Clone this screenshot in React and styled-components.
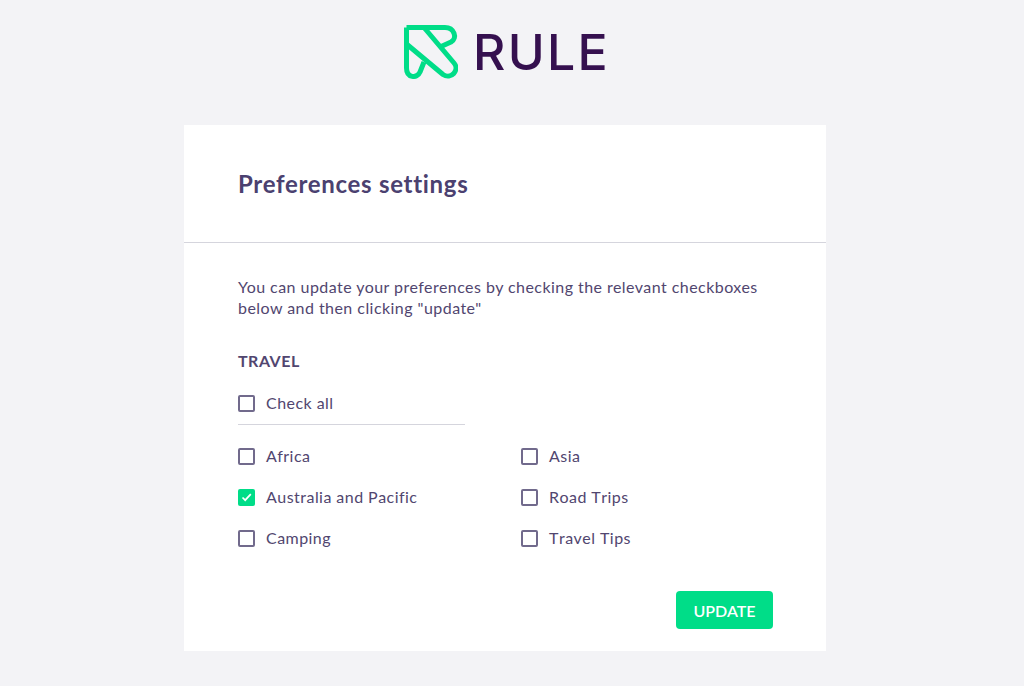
import React, { useState } from 'react';
import styled, { createGlobalStyle } from 'styled-components';

const Global = createGlobalStyle`
  html, body { margin: 0; padding: 0; }
  body {
    background: #f3f3f6;
    font-family: Lato, "Liberation Sans", sans-serif;
    color: #51466f;
  }
`;

const Page = styled.div`
  display: flex;
  flex-direction: column;
  align-items: center;
  box-sizing: border-box;
  height: 686px;
  padding-right: 14px;
  overflow: hidden;
`;

const LogoRow = styled.header`
  height: 125px;
  width: 100%;
  display: flex;
  justify-content: center;
  align-items: flex-start;
  gap: 15px;
  padding: 25px 0 0 4px;
  box-sizing: border-box;
`;

const LogoText = styled.span`
  font-family: Inter, sans-serif;
  font-size: 50px;
  line-height: 54px;
  font-weight: 500;
  color: #35104f;
  letter-spacing: 2.3px;
`;

const Card = styled.main`
  width: 642px;
  background: #fff;
`;

const CardHead = styled.div`
  height: 117px;
  padding: 0 54px;
  display: flex;
  align-items: center;
  border-bottom: 1px solid #d5d5dd;
`;

const Title = styled.h1`
  margin: 0;
  font-size: 24px;
  font-weight: 700;
  letter-spacing: 0.7px;
  color: #4b4170;
`;

const CardBody = styled.div`
  padding: 33px 53px 22px 54px;
`;

const Intro = styled.p`
  margin: 0 0 33px;
  font-size: 16px;
  line-height: 21px;
  letter-spacing: 0.45px;
`;

const GroupName = styled.h2`
  margin: 0 0 20px;
  font-size: 16px;
  line-height: 20px;
  font-weight: 700;
  letter-spacing: 0.5px;
`;

const CheckAllRow = styled.div`
  width: 227px;
  padding-bottom: 11px;
  border-bottom: 1px solid #d5d5dd;
  margin-bottom: 19px;
`;

const Options = styled.div`
  display: grid;
  grid-template-columns: 283px 1fr;
  row-gap: 19px;
`;

const Row = styled.label`
  display: flex;
  align-items: center;
  gap: 11px;
  height: 22px;
  font-size: 16px;
  letter-spacing: 0.45px;
  font-kerning: none;
  cursor: pointer;
`;

const Box = styled.span`
  width: 17px;
  height: 17px;
  margin-top: 2px;
  box-sizing: border-box;
  border-radius: 2px;
  border: ${p => (p.$on ? 'none' : '2px solid #716a8c')};
  background: ${p => (p.$on ? '#00dd88' : '#fff')};
  display: flex;
  align-items: center;
  justify-content: center;
`;

const HiddenInput = styled.input`
  position: absolute;
  opacity: 0;
  width: 0;
  height: 0;
`;

const Footer = styled.div`
  display: flex;
  justify-content: flex-end;
  margin-top: 43px;
`;

const UpdateButton = styled.button`
  width: 97px;
  height: 38px;
  border: none;
  border-radius: 4px;
  background: #00dd88;
  color: #fff;
  font-family: inherit;
  font-size: 16px;
  font-weight: 600;
  cursor: pointer;
`;

const Logo = () => (
  <svg width="54" height="54" viewBox="0 0 54 54" fill="none" stroke="#00dd88" strokeWidth="5" strokeLinejoin="round">
    <path d="M2.5 2.5H41C50 2.5 54 13 47 17L36 22" />
    <path d="M20 2.5L50 38C56 45 47 55 39 49.5L2.5 19" />
    <path d="M2.5 2.5V43C2.5 53 13 54 16 47L20 37" />
  </svg>
);

const Option = ({ label, checked, onToggle }) => (
  <Row>
    <HiddenInput type="checkbox" checked={checked} onChange={onToggle} />
    <Box $on={checked}>
      {checked && (
        <svg width="11" height="9" viewBox="0 0 11 9" fill="none" stroke="#fff" strokeWidth="1.7">
          <path d="M1.5 4.5L4.2 7.2L9.8 1.2" />
        </svg>
      )}
    </Box>
    {label}
  </Row>
);

const topics = ['Africa', 'Asia', 'Australia and Pacific', 'Road Trips', 'Camping', 'Travel Tips'];

export default function App() {
  const [picked, setPicked] = useState(['Australia and Pacific']);

  const toggle = name =>
    setPicked(p => (p.includes(name) ? p.filter(x => x !== name) : [...p, name]));

  const allOn = picked.length === topics.length;

  return (
    <Page>
      <Global />
      <LogoRow>
        <Logo />
        <LogoText>RULE</LogoText>
      </LogoRow>
      <Card>
        <CardHead>
          <Title>Preferences settings</Title>
        </CardHead>
        <CardBody>
          <Intro>
            You can update your preferences by checking the relevant checkboxes
            <br />
            below and then clicking "update"
          </Intro>
          <GroupName>TRAVEL</GroupName>
          <CheckAllRow>
            <Option label="Check all" checked={allOn} onToggle={() => setPicked(allOn ? [] : topics)} />
          </CheckAllRow>
          <Options>
            {topics.map(t => (
              <Option key={t} label={t} checked={picked.includes(t)} onToggle={() => toggle(t)} />
            ))}
          </Options>
          <Footer>
            <UpdateButton>UPDATE</UpdateButton>
          </Footer>
        </CardBody>
      </Card>
    </Page>
  );
}
